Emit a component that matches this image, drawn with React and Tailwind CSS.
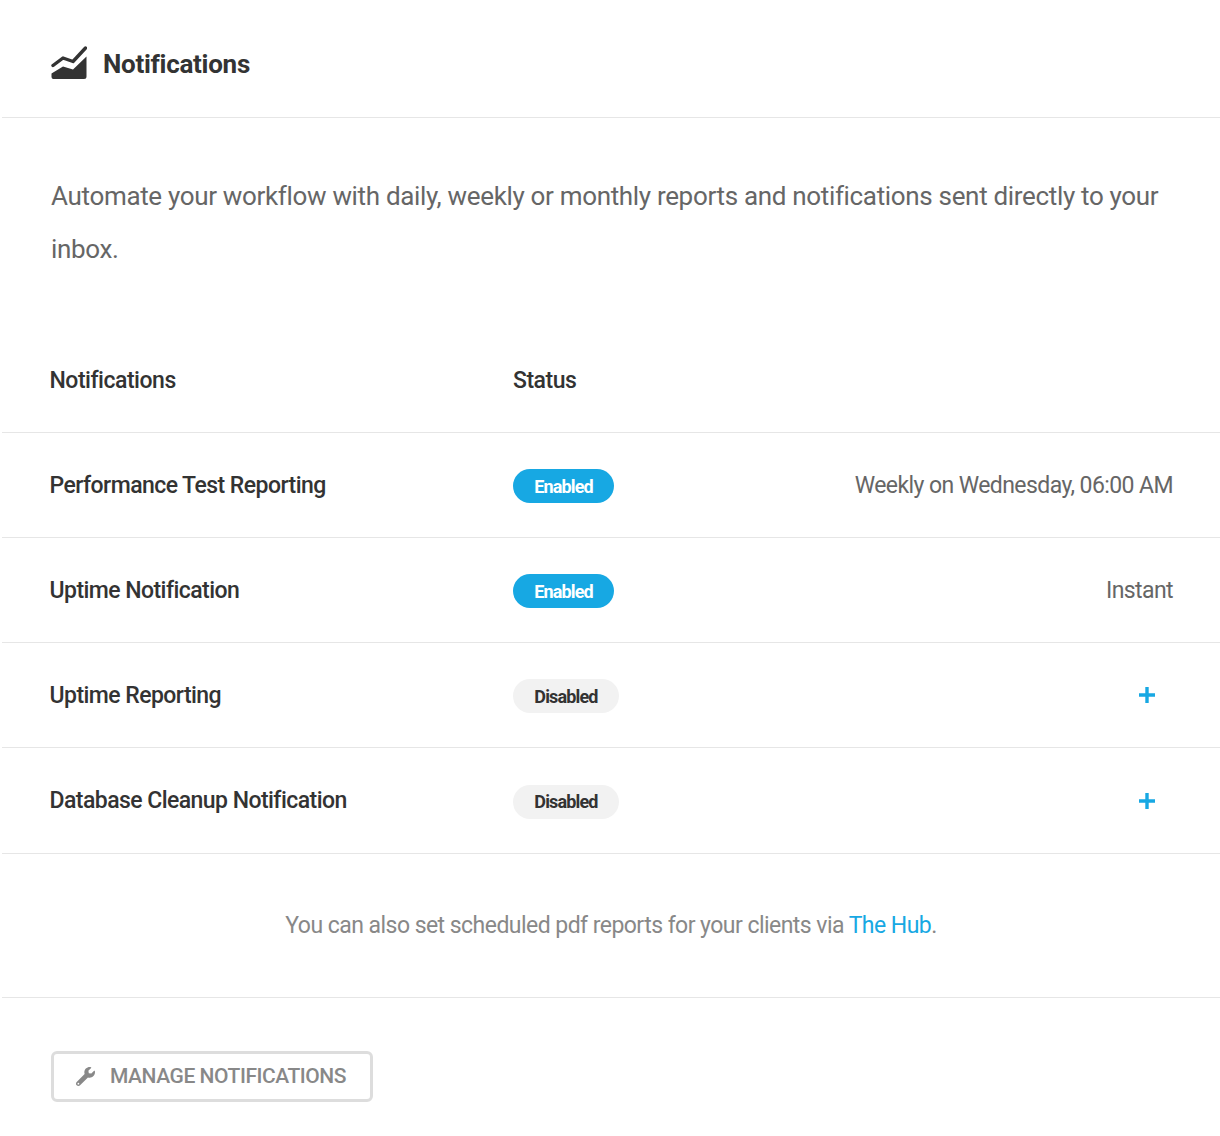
import React from "react";
import { FaWrench } from "react-icons/fa";

const rows = [
  { name: "Performance Test Reporting", on: true, right: "Weekly on Wednesday, 06:00 AM", h: "h-[105px]", nameCls: "pb-px" },
  { name: "Uptime Notification", on: true, right: "Instant", h: "h-[105px]", nameCls: "pb-px" },
  { name: "Uptime Reporting", on: false, h: "h-[105px]", nameCls: "pb-px" },
  { name: "Database Cleanup Notification", on: false, h: "h-[106px]", nameCls: "pb-[3px]" },
];

function ChartIcon() {
  return (
    <svg width="36" height="34" viewBox="0 0 36 34" className="block -mt-[2px]">
      <path d="M0.5 27.5L12 20.5L22 23.5L35.5 10.5V30.5Q35.5 33 33 33H2.5Q0.5 33 0.5 31Z" fill="#333333" />
      <path d="M2 19.5L12 12L22 15.5L34.5 2" fill="none" stroke="#333333" strokeWidth="3.4" strokeLinecap="round" strokeLinejoin="round" />
    </svg>
  );
}

export default function App() {
  return (
    <div className="w-[1220px] h-[1136px] bg-white pl-[2px] font-['Roboto',sans-serif] text-[#333333]">
      <header className="h-[118px] border-b border-[#e6e6e6] flex items-center pl-[49px] gap-[16px] pt-[10px]">
        <ChartIcon />
        <h1 className="text-[26px] font-bold tracking-[-0.28px] leading-none">Notifications</h1>
      </header>

      <p className="pl-[49px] pr-[50px] pt-[52px] h-[245px] text-[26px] leading-[53px] tracking-[-0.33px] text-[#666666]">
        Automate your workflow with daily, weekly or monthly reports and notifications sent directly to your inbox.
      </p>

      <div className="flex items-center h-[70px] pb-[33px] border-b border-[#e6e6e6] pl-[47.5px] text-[23px] font-medium tracking-[-0.48px]">
        <span className="w-[463.5px]">Notifications</span>
        <span>Status</span>
      </div>

      {rows.map((r) => (
        <div key={r.name} className={`flex items-center ${r.h} pt-[2px] border-b border-[#e6e6e6] pl-[47.5px] pr-[47px]`}>
          <span className={`w-[463.5px] text-[23px] font-medium tracking-[-0.55px] leading-none ${r.nameCls}`}>{r.name}</span>
          <span
            className={
              r.on
                ? "flex items-center justify-center w-[101px] h-[34px] rounded-full bg-[#17a8e3] text-white text-[18px] font-bold tracking-[-0.85px]"
                : "flex items-center justify-center w-[106px] h-[34px] rounded-full bg-[#f2f2f2] text-[#333333] text-[18px] font-bold tracking-[-0.85px]"
            }
          >
            {r.on ? "Enabled" : "Disabled"}
          </span>
          <span className="ml-auto text-[23px] tracking-[-0.58px] text-[#666666]">
            {r.right ? (
              r.right
            ) : (
              <svg width="16" height="16" viewBox="0 0 16 16" className="block mr-[18px] -mt-[2px]">
                <path d="M8 0.5V15.5M0.5 8H15.5" stroke="#17a8e3" strokeWidth="3.4" strokeLinecap="round" />
              </svg>
            )}
          </span>
        </div>
      ))}

      <div className="h-[144px] pt-[2px] border-b border-[#e6e6e6] flex items-center justify-center text-[23px] tracking-[-0.54px] text-[#888888]">
        <p>
          You can also set scheduled pdf reports for your clients via <a className="text-[#17a8e3]">The Hub</a>.
        </p>
      </div>

      <div className="pl-[49px] pt-[53px]">
        <button className="flex items-center w-[322px] h-[51px] border-[3px] border-[#dddddd] rounded-[6px] pl-[22px] gap-[15px] text-[21px] font-medium tracking-[-0.45px] text-[#888888]">
          <FaWrench className="w-[19px] h-[19px]" />
          MANAGE NOTIFICATIONS
        </button>
      </div>
    </div>
  );
}
